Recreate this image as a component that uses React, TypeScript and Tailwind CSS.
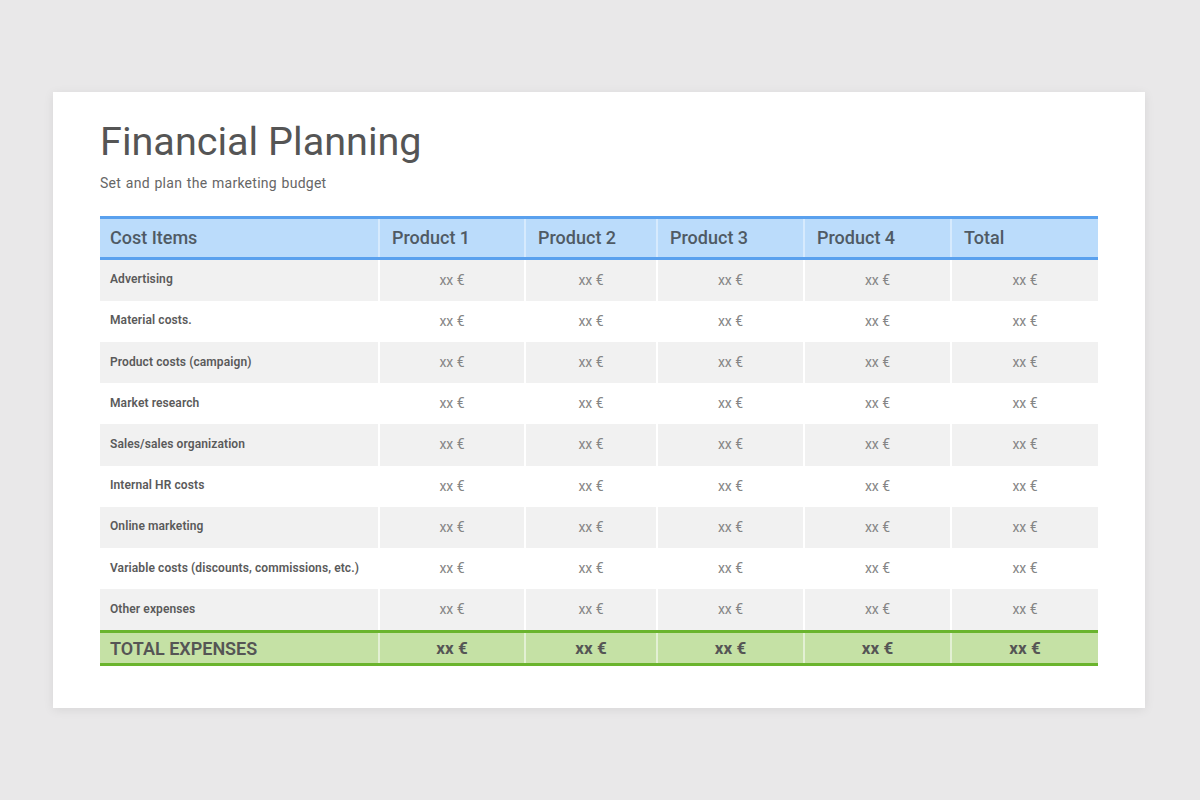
const rows = [
  "Advertising",
  "Material costs.",
  "Product costs (campaign)",
  "Market research",
  "Sales/sales organization",
  "Internal HR costs",
  "Online marketing",
  "Variable costs (discounts, commissions, etc.)",
  "Other expenses",
];

const headers = ["Product 1", "Product 2", "Product 3", "Product 4", "Total"];

const cols = "grid grid-cols-[280px_146px_132px_147px_147px_146px]";

export default function App() {
  return (
    <div className="min-h-screen bg-[#e9e8e9] pt-[92px] pl-[53px] font-['Roboto',_'Liberation_Sans',_sans-serif]">
      <div className="w-[1092px] h-[616px] bg-white shadow-[0_2px_10px_rgba(0,0,0,0.08)] pt-[30px] pl-[47px]">
        <h1 className="text-[39.6px] leading-none text-[#555]">Financial Planning</h1>
        <p className="mt-[11px] text-[14px] text-[#666] tracking-[0.25px] [word-spacing:1px]">Set and plan the marketing budget</p>

        <div className="mt-[22px] w-[998px]">
          {/* header */}
          <div className={`${cols} h-[44px] bg-[#bbdcfb] border-y-[3px] border-[#5aa1ee]`}>
            <div className="flex items-center pl-[10px] text-[18px] font-medium text-[#4f5a64] border-r-2 border-[#d6eafd]">
              Cost Items
            </div>
            {headers.map((h, i) => (
              <div
                key={h}
                className={`flex items-center pl-[12px] text-[18px] font-medium text-[#4f5a64] ${
                  i < headers.length - 1 ? "border-r-2 border-[#d6eafd]" : ""
                }`}
              >
                {h}
              </div>
            ))}
          </div>

          {/* body */}
          {rows.map((r, idx) => (
            <div key={r} className={`${cols} h-[41.2px] ${idx % 2 === 0 ? "bg-[#f1f1f1]" : "bg-white"}`}>
              <div className="flex items-center pl-[10px] pb-[2px] text-[12px] font-semibold tracking-[0.1px] text-[#5a5a5a] border-r-2 border-white">
                {r}
              </div>
              {headers.map((h, i) => (
                <div
                  key={h}
                  className={`flex items-center justify-center text-[14px] text-[#858585] ${
                    i < headers.length - 1 ? "border-r-2 border-white" : ""
                  }`}
                >
                  xx €
                </div>
              ))}
            </div>
          ))}

          {/* total */}
          <div className={`${cols} h-[36px] bg-[#c5e1a5] border-y-[3px] border-[#6ab42d]`}>
            <div className="flex items-center pl-[10px] text-[18px] font-semibold text-[#555] border-r-2 border-[#e3f0d4]">
              TOTAL EXPENSES
            </div>
            {headers.map((h, i) => (
              <div
                key={h}
                className={`flex items-center justify-center text-[17px] font-bold text-[#555] ${
                  i < headers.length - 1 ? "border-r-2 border-[#e3f0d4]" : ""
                }`}
              >
                xx €
              </div>
            ))}
          </div>
        </div>
      </div>
    </div>
  );
}
